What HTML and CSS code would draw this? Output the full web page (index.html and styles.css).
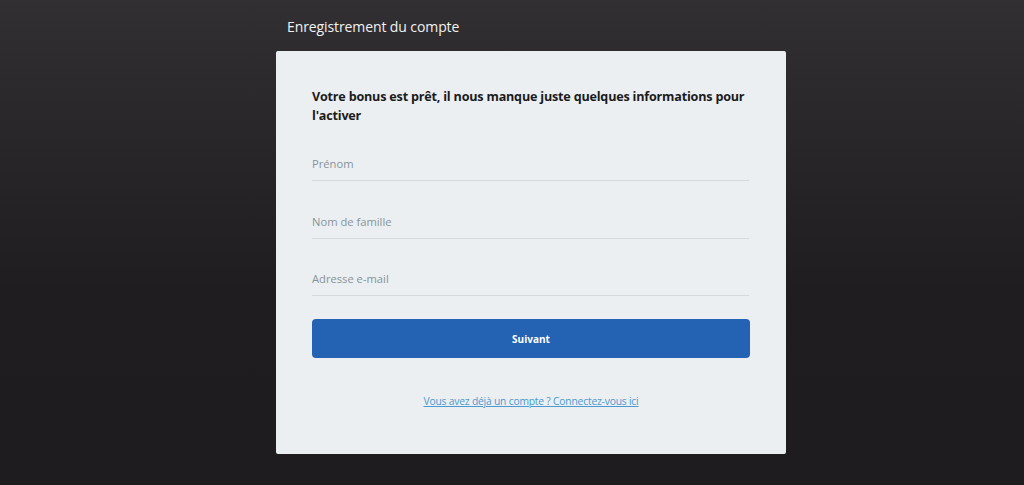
FILE: index.html
```html
<!DOCTYPE html>
<html lang="fr">
<head>
    <meta charset="UTF-8">
    <meta name="viewport" content="width=device-width, initial-scale=1.0">
    <title>Enregistrement du compte</title>
    <link rel="stylesheet" href="styles.css">
</head>

<body>
    <div class="container">
        <h1 class="page-title">Enregistrement du compte</h1>

        <!-- formulaire d'inscription -->
        <div class="card">
            <h2>Votre bonus est prêt, il nous manque juste quelques informations pour l'activer</h2>
            <form action="#" method="post">
                <input type="text" name="firstname" placeholder="Prénom">
                <input type="text" name="lastname" placeholder="Nom de famille">
                <input type="email" name="email" placeholder="Adresse e-mail">
                <button type="submit">Suivant</button>
            </form>
            <p class="login-link"><a href="#">Vous avez déjà un compte ? Connectez-vous ici</a></p>
        </div>
    </div>
</body>
</html>
```

FILE: styles.css
```css
/* mise en page */

body {
    font-family: "Open Sans", "Noto Sans", Arial, sans-serif;
    background: linear-gradient(to bottom, #312f31 0%, #1f1d1f 60%, #1e1c1e 100%);
    height: 485px;
    margin: 0;
}

.container {
    width: 510px;
    margin-left: calc(50% - 236px);
}

.page-title {
    margin: 0;
    padding: 17px 0 0 11px;
    height: 34px;
    font-size: 14px;
    letter-spacing: -0.1px;
    font-weight: normal;
    color: #f2f2f2;
}

.card {
    box-sizing: border-box;
    height: 403px;
    background: #ebeff2;
    border-radius: 2px;
    padding: 36px 36px 0 36px;
}

h2 {
    margin: 0 0 23px 0;
    font-size: 12.6px;
    letter-spacing: -0.2px;
    line-height: 19px;
    font-weight: bold;
    color: #1b1b1b;
}

form {
    display: flex;
    flex-direction: column;
}

input {
    font-family: inherit;
    font-size: 11.2px;
    line-height: 15px;
    height: 15px;
    background: transparent;
    border: none;
    border-bottom: 1px solid #d6dadd;
    padding: 8px 0 9px 0;
    margin: 0 0 24.5px 0;
    width: 437px;
    outline: none;
}

input:last-of-type {
    margin-bottom: 23px;
}

input::placeholder {
    color: #879497;
}

button {
    height: 39px;
    background-color: #2462b4;
    color: white;
    border: none;
    border-radius: 4px;
    font-family: inherit;
    font-size: 10px;
    font-weight: bold;
    cursor: pointer;
}

.login-link {
    margin: 36px 0 0 0;
    text-align: center;
    font-size: 10.3px;
    letter-spacing: -0.2px;
    line-height: 14px;
}

a {
    color: #4a9ad0;
    text-decoration: underline;
}
```
